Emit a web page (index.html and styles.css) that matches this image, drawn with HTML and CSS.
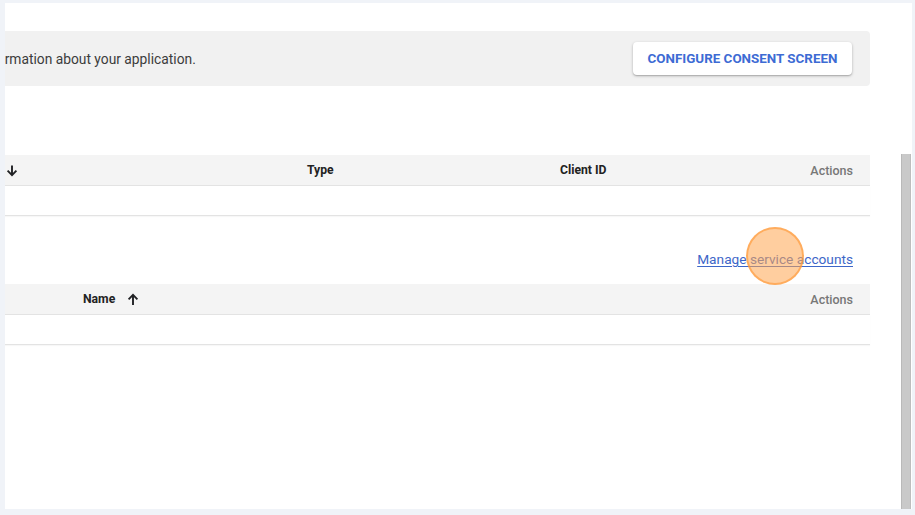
FILE: index.html
```html
<!DOCTYPE html>
<html>
<head>
<meta charset="utf-8">
<link rel="stylesheet" href="styles.css">
</head>
<body>
<div class="frame">
  <div class="panel">
    <main class="content">
      <div class="banner">
        <p class="banner-text">information about your application.</p>
        <button class="btn">CONFIGURE CONSENT SCREEN</button>
      </div>

      <section class="table t1">
        <div class="thead">
          <div class="cell c-name"><svg class="arrow" viewBox="0 0 12 12"><path d="M6 1v9.5M1.6 6.2L6 10.6l4.4-4.4" fill="none" stroke="#202124" stroke-width="1.9"/></svg></div>
          <div class="cell c-type">Type</div>
          <div class="cell c-client">Client ID</div>
          <div class="cell c-actions">Actions</div>
        </div>
        <div class="trow"></div>
      </section>

      <div class="link-row">
        <a class="link" href="#">Manage service accounts</a>
        <span class="click-mark"></span>
      </div>

      <section class="table t2">
        <div class="thead">
          <div class="cell c-name2">Name <svg class="arrow up" viewBox="0 0 12 12"><path d="M6 11.5V1.5M1.6 5.8L6 1.4l4.4 4.4" fill="none" stroke="#202124" stroke-width="1.9"/></svg></div>
          <div class="cell c-actions">Actions</div>
        </div>
        <div class="trow"></div>
      </section>
    </main>
    <div class="scroll-col"><div class="thumb"></div></div>
  </div>
</div>
</body>
</html>
```

FILE: styles.css
```css
html, body {
  margin: 0;
  padding: 0;
  width: 915px;
  height: 515px;
  background: #f0f3f8;
  font-family: Roboto, "Liberation Sans", Arial, sans-serif;
  overflow: hidden;
}
.frame {
  padding: 3px 3px 6px 5px;
  height: 515px;
  box-sizing: border-box;
}
.panel {
  background: #fff;
  height: 100%;
  display: flex;
  overflow: hidden;
}
.content {
  width: 865px;
  flex: none;
}
.banner {
  margin-top: 28px;
  height: 55px;
  background: #f1f1f1;
  border-radius: 0 4px 4px 0;
  display: flex;
  align-items: center;
  justify-content: space-between;
  padding-right: 18px;
  overflow: hidden;
}
.banner-text {
  margin: 0 0 0 -24px;
  font-size: 13.8px;
  color: #3c3c3c;
  white-space: nowrap;
}
.btn {
  height: 33px;
  width: 219px;
  border: none;
  border-radius: 4px;
  background: #fff;
  box-shadow: 0 1px 3px rgba(0,0,0,0.25), 0 1px 1px rgba(0,0,0,0.12);
  color: #3d6bd4;
  font-family: Roboto, "Liberation Sans", Arial, sans-serif;
  font-weight: 700;
  font-size: 13.4px;
  letter-spacing: 0;
  padding: 0;
  margin-top: -1px;
}
.table.t1 { margin-top: 69px; }
.thead {
  height: 30px;
  background: #f4f4f4;
  border-bottom: 1px solid #e3e3e3;
  display: flex;
  align-items: center;
  font-size: 12.2px;
}
.trow {
  height: 29px;
  border-bottom: 1px solid #e3e3e3;
  box-shadow: 0 1px 1px rgba(0,0,0,0.03);
}
.cell { white-space: nowrap; }
.c-name { width: 302px; flex: none; display: flex; align-items: center; padding-left: 1px; box-sizing: border-box; }
.c-type { width: 253px; flex: none; font-weight: 700; color: #222; }
.c-client { flex: none; font-weight: 700; color: #222; }
.c-actions { margin-left: auto; padding-right: 17px; color: #777; font-weight: 500; font-size: 12.5px; }
.c-name2 { padding-left: 78px; font-weight: 700; color: #222; display: flex; align-items: center; gap: 12px; }
.arrow { width: 12px; height: 13px; display: block; }
.link-row {
  position: relative;
  height: 68px;
  display: flex;
  justify-content: flex-end;
  align-items: flex-end;
  padding-right: 17px;
  box-sizing: border-box;
}
.link {
  font-size: 13.7px;
  color: #3d66c8;
  text-decoration: underline;
  text-underline-offset: 2px;
  margin-bottom: 17px;
}
.click-mark {
  position: absolute;
  left: 741px;
  top: 11px;
  width: 54px;
  height: 54px;
  border-radius: 50%;
  background: rgba(255, 165, 80, 0.55);
  border: 2px solid rgba(255, 150, 50, 0.6);
}
.scroll-col {
  width: 42px;
  flex: none;
  padding: 151px 1px 0 31px;
  box-sizing: border-box;
}
.thumb {
  height: 100%;
  background: #c9c9c9;
  border-left: 1px solid #b9b9b9;
  border-right: 1px solid #bdbdbd;
  box-sizing: border-box;
}
```
